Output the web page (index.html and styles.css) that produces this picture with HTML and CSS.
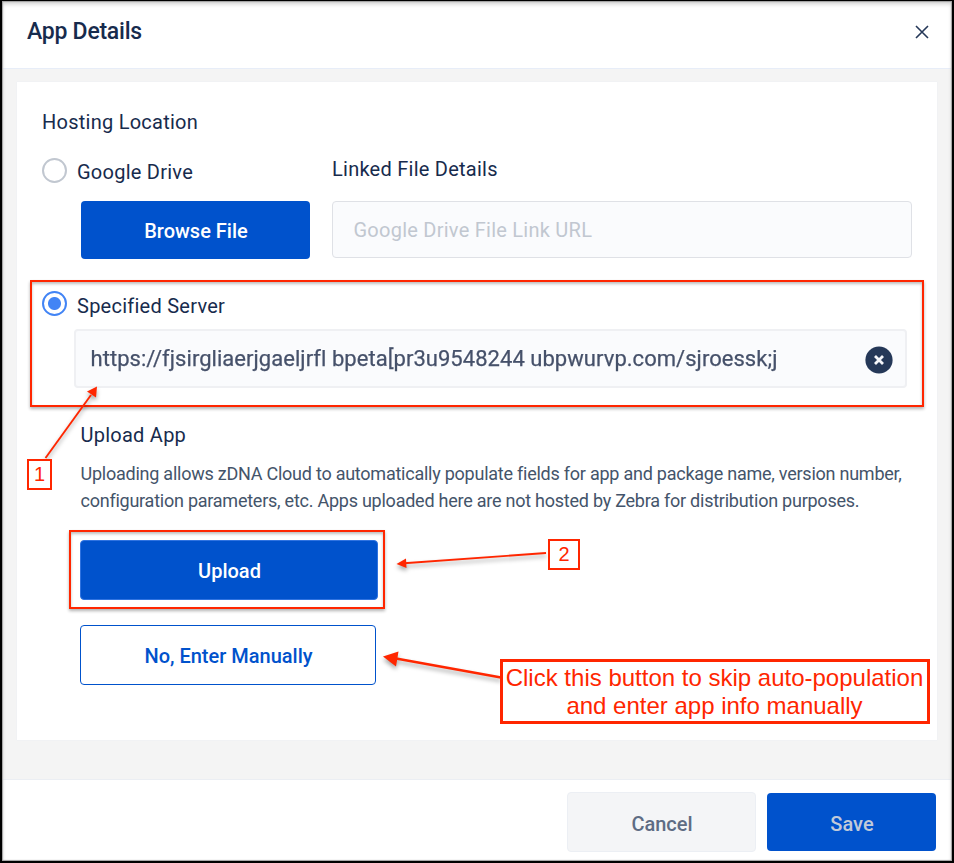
FILE: index.html
```html
<!DOCTYPE html>
<html lang="en">
<head>
<meta charset="utf-8">
<title>App Details</title>
<link rel="stylesheet" href="styles.css">
</head>
<body>
<div class="dialog">
  <header class="header">
    <h1 class="title"><span>App Details</span></h1>
    <svg class="close" width="14" height="14" viewBox="0 0 14 14"><path d="M1 1L13 13M13 1L1 13"/></svg>
  </header>
  <main class="body">
    <section class="card">
      <h2 class="heading"><span>Hosting Location</span></h2>
      <div class="drive">
        <div class="drive-choice">
          <label class="option"><i class="radio"></i><span class="t-drive">Google Drive</span></label>
          <button class="btn browse"><span>Browse File</span></button>
        </div>
        <div class="linked">
          <div class="linked-label"><span>Linked File Details</span></div>
          <div class="field link-field"><span>Google Drive File Link URL</span></div>
        </div>
      </div>
      <div class="server highlight">
        <label class="option"><i class="radio checked"></i><span class="t-server">Specified Server</span></label>
        <div class="field url-field">
          <span>https://fjsirgliaerjgaeljrfl bpeta[pr3u9548244 ubpwurvp.com/sjroessk;j</span>
          <svg class="clear" width="28" height="28" viewBox="0 0 28 28"><circle cx="14" cy="14" r="13.6"/><path d="M10 10L18 18M18 10L10 18"/></svg>
        </div>
      </div>
      <div class="upload">
        <h3 class="upload-title"><span>Upload App</span></h3>
        <p class="note">Uploading allows zDNA Cloud to automatically populate fields for app and package name, version number,<br>configuration parameters, etc. Apps uploaded here are not hosted by Zebra for distribution purposes.</p>
      </div>
      <div class="upload-box highlight"><button class="btn upload-btn"><span>Upload</span></button></div>
      <button class="btn manual"><span>No, Enter Manually</span></button>
    </section>
  </main>
  <footer class="footer">
    <button class="btn cancel"><span>Cancel</span></button>
    <button class="btn save"><span>Save</span></button>
  </footer>
</div>
<svg class="arrows" width="954" height="863" viewBox="0 0 954 863">
  <g class="arrow">
    <path class="line" d="M45.500 458L91 395"/><path class="head" d="M97 386.500L96 397.500L87 391.500Z"/>
    <path class="line" d="M546 553L404 563.300"/><path class="head" d="M396.500 564L406 558.500L406.500 568Z"/>
    <path class="line thick" d="M501 677.500L396 658.500"/><path class="head" d="M383 656.500L398.500 651.500L396 666.500Z"/>
  </g>
</svg>
<div class="tag tag-one"><span>1</span></div>
<div class="tag tag-two"><span>2</span></div>
<div class="callout">Click this button to skip auto-population<br>and enter app info manually</div>
</body>
</html>
```
FILE: styles.css
```css
* { box-sizing: border-box; }
body { margin: 0; width: 954px; height: 863px; overflow: hidden; position: relative; font: 400 20px/24px Roboto, sans-serif; color: #172b4d; background: #fff; }
h1, h2, h3, p { margin: 0; font-weight: 400; font-size: 20px; }
.dialog { display: flex; flex-direction: column; height: 863px; border: 2px solid #000; border-top-width: 1px; position: relative; }
.dialog::after { content: ""; position: absolute; inset: 0; box-shadow: inset 0 0 1px 1px #a0a0a0, inset 0 3px 4px #d0d0d0; pointer-events: none; }
.header { height: 68px; flex: none; display: flex; justify-content: space-between; align-items: flex-start; padding: 19px 23px 0 25px; border-bottom: 1px solid #e7edf8; }
.title { font-size: 23px; font-weight: 500; }
.title span { letter-spacing: -0.25px; }
.close { margin-top: 5px; fill: none; stroke: #253858; stroke-width: 1.6; }
.body { flex: 1; background: #f4f4f4; padding: 13px 15px 0; }
.card { background: #fff; height: 658px; padding: 28px 13px 0; box-shadow: 0 0 1px #dfe5f2; }
.heading { padding-left: 12px; }
.heading span, .option span, .linked-label span, .upload-title span { letter-spacing: 0.25px; }
.drive { display: flex; gap: 22px; height: 146px; padding: 23px 12px 0; }
.drive-choice { width: 268px; }
.option { display: flex; gap: 10px; height: 26px; }
.option span { padding-top: 3px; }
.radio { width: 25px; height: 25px; margin-top: 1px; border: 2px solid #c1c7d0; border-radius: 50%; background: #fff; flex: none; }
.radio.checked { margin-top: 0; border-color: #4284f5; background: radial-gradient(circle, #4284f5 6px, #fff 7px); }
.btn { display: flex; align-items: center; justify-content: center; padding: 2px 0 0 1px; margin: 0; border: 0; border-radius: 4px; font: 500 20px/24px Roboto, sans-serif; color: #fff; background: #0052cc; white-space: nowrap; }
.browse { width: 229px; height: 58px; margin: 18px 0 0 39px; }
.linked { width: 580px; }
.field { display: flex; align-items: center; border: 1px solid #dfe1e6; border-radius: 4px; background: #fafbfd; white-space: nowrap; }
.link-field { height: 57px; margin-top: 20px; padding-left: 20.5px; color: #c1c7d0; }
.link-field span { letter-spacing: 0.25px; }
.highlight { border: 2px solid #ff2600; box-shadow: 0 2px 3px rgba(0,0,0,.3), inset 0 2px 3px rgba(0,0,0,.25); }
.server { width: 894px; height: 127px; padding: 9px 15px 0 10px; }
.url-field { height: 59px; width: 833px; margin: 12px 0 0 32px; padding: 0 12px 0 14.5px; justify-content: space-between; border: 2px solid #eff0f3; font-size: 22px; color: #46516a; }
.url-field span { letter-spacing: 0.04px; -webkit-text-stroke: 0.25px #46516a; filter: blur(.55px); }
.clear { margin-top: 2px; fill: #253858; stroke: none; }
.clear path { stroke: #f5f6fa; stroke-width: 2.8; }
.upload { padding: 16px 0 0 50.5px; height: 123px; white-space: nowrap; }
.note { margin-top: 13px; font-size: 18px; line-height: 27px; letter-spacing: -0.242px; color: #44546a; }
.upload-box { width: 316px; height: 79px; margin-left: 39px; padding: 8px 0 0 9px; }
.upload-btn { width: 298px; height: 60px; border: 1px solid #2f73e0; }
.manual { width: 296px; height: 60px; margin: 16px 0 0 50px; border: 1px solid #0052cc; background: #fff; color: #0052cc; }
.footer { height: 82px; flex: none; display: flex; gap: 11px; justify-content: flex-end; padding: 13px 16px 0 0; border-top: 1px solid #ebeef3; }
.cancel { width: 189px; height: 60px; margin-top: -1px; padding-top: 4px; background: #f4f5f7; border: 1px solid #eceff4; color: #5e6c84; }
.save { width: 169px; height: 58px; padding-top: 4px; color: #c1cad9; }
.arrows { position: absolute; left: 0; top: 0; pointer-events: none; }
.arrow { filter: drop-shadow(0 3px 2px rgba(0,0,0,.35)); }
.line { fill: none; stroke: #ff2600; stroke-width: 1.9; }
.line.thick { stroke-width: 2.5; }
.head { fill: #ff2600; }
.tag, .callout { position: absolute; border: 2px solid #ff2600; background: #fff; color: #ff2600; text-align: center; white-space: nowrap; }
.tag { font: 400 20px/27px "Liberation Sans", Arial, sans-serif; }
.tag-one { left: 27px; top: 459px; width: 25px; height: 31px; }
.tag-two { left: 548px; top: 539px; width: 32px; height: 31px; }
.callout { left: 499.5px; top: 659px; width: 430px; height: 65px; border-width: 3px; padding-top: 2px; font: 400 24px/28px "Liberation Sans", Arial, sans-serif; }
```
